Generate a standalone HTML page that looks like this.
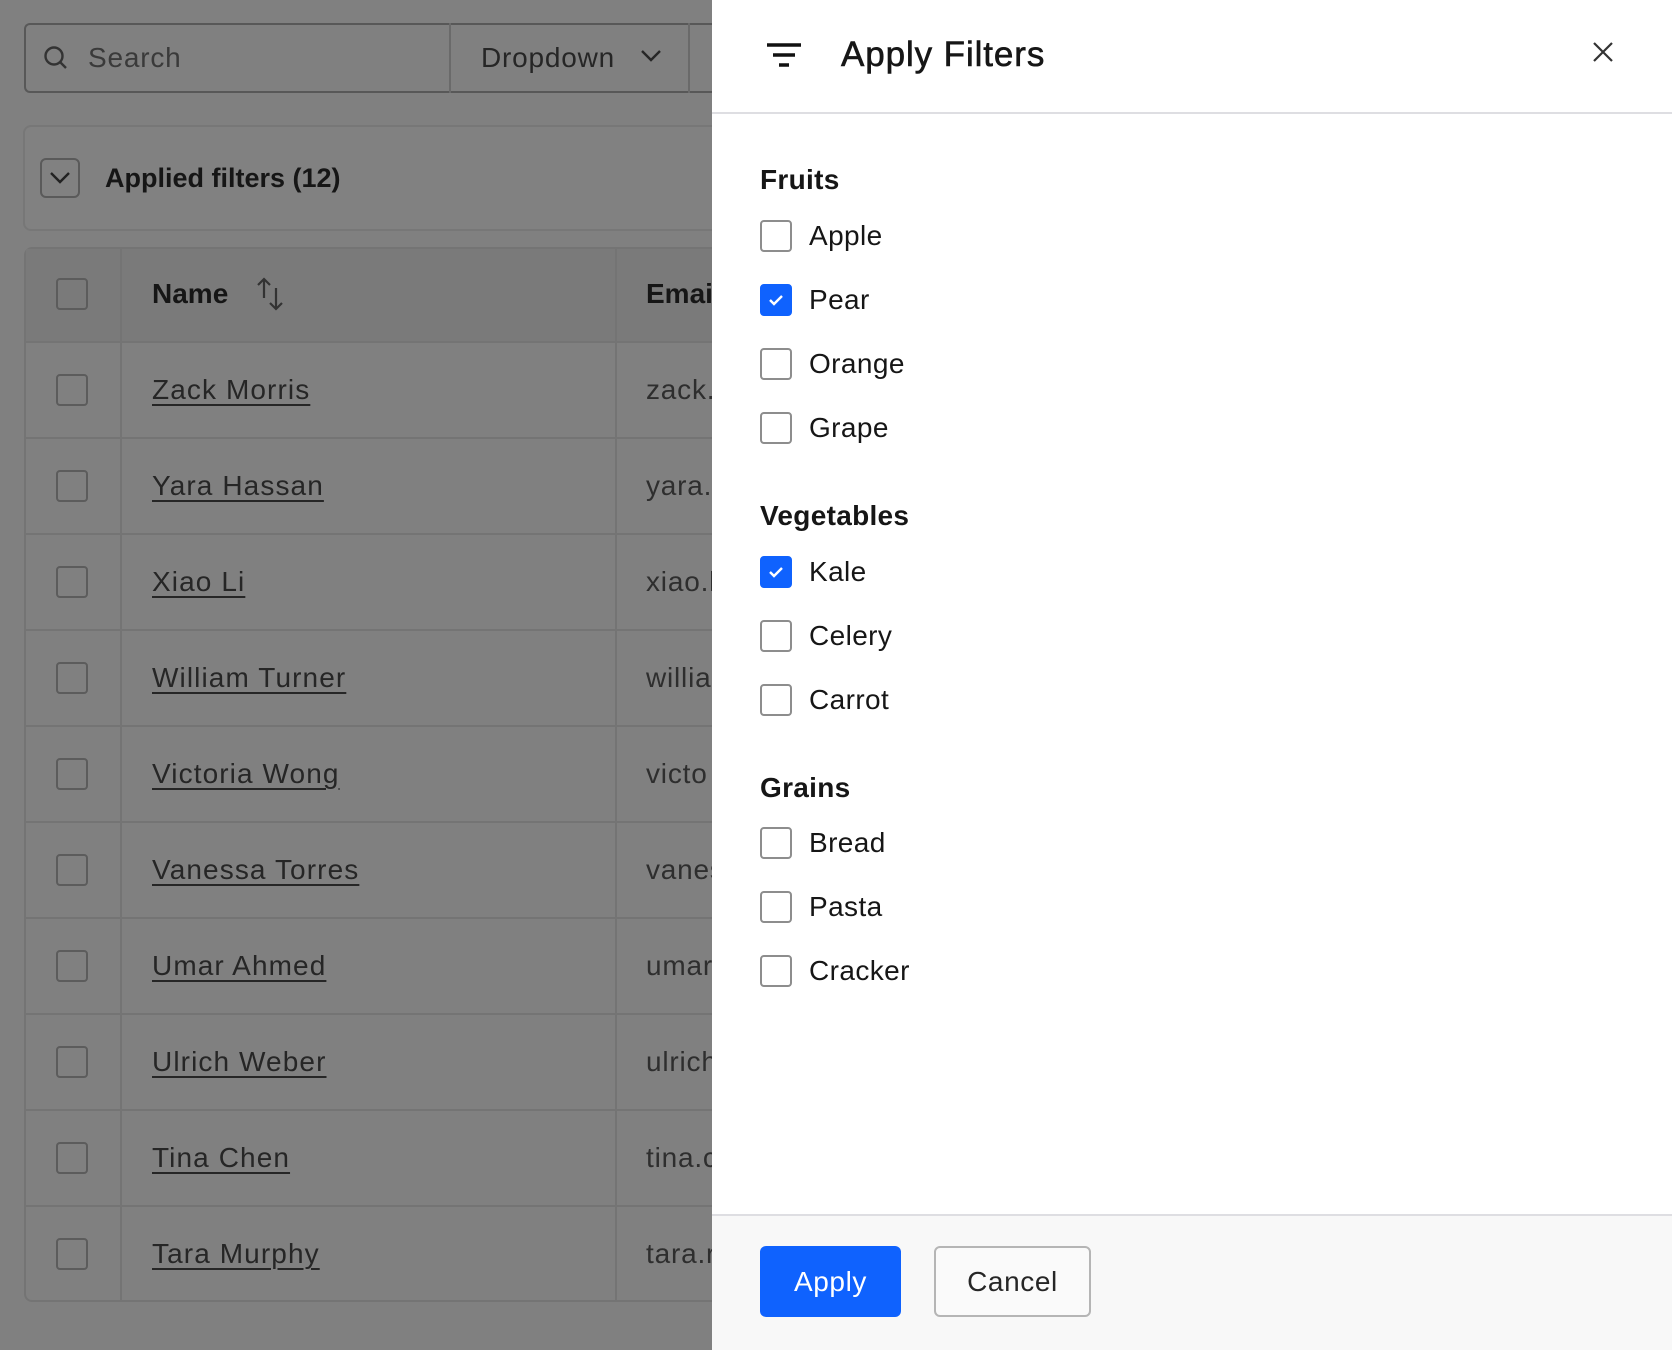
<!DOCTYPE html>
<html><head><meta charset="utf-8"><style>
*{box-sizing:border-box;margin:0;padding:0}
body{width:1672px;height:1350px;overflow:hidden;background:#808080;font-family:"Liberation Sans",sans-serif;position:relative}
.a{position:absolute}
.cb{position:absolute;width:32px;height:32px;border:2px solid #5c5c5c;border-radius:4px}
.row{position:absolute;left:24px;width:700px;height:96px;border-top:2px solid #747474}
.nm{position:absolute;left:152px;font-size:28px;color:#262626;text-decoration:underline;text-underline-offset:5px;text-decoration-thickness:2px;line-height:32px;letter-spacing:1.1px}
.em{position:absolute;left:646px;font-size:28px;color:#2e2e2e;line-height:32px;letter-spacing:0.8px}
.panel{position:absolute;left:712px;top:0;width:960px;height:1350px;background:#fff}
.h{position:absolute;left:48px;font-size:28px;font-weight:bold;color:#161616;line-height:32px;letter-spacing:0.3px}
.it{position:absolute;left:48px;height:32px}
.it .b{position:absolute;left:0;top:0;width:32px;height:32px;border:2px solid #8d8d8d;border-radius:4px;background:#fff}
.it .b.on{background:#0f62fe;border-color:#0f62fe}
.it span{position:absolute;left:49px;top:0;font-size:28px;line-height:32px;color:#161616;white-space:nowrap;letter-spacing:0.4px}
</style></head><body>
<div class="a" style="left:24px;top:23px;width:700px;height:70px;border:2px solid #585858;border-radius:6px;border-right:none"></div>
<div class="a" style="left:449px;top:23px;width:2px;height:70px;background:#6a6a6a"></div>
<div class="a" style="left:688px;top:23px;width:2px;height:70px;background:#6a6a6a"></div>
<svg class="a" style="left:42px;top:44px" width="28" height="28" viewBox="0 0 28 28"><circle cx="12" cy="12" r="8.5" fill="none" stroke="#333" stroke-width="2.4"/><path d="M18 18l6 6" stroke="#333" stroke-width="2.4"/></svg>
<div class="a" style="left:88px;top:42px;font-size:28px;color:#3a3a3a;letter-spacing:0.8px">Search</div>
<div class="a" style="left:481px;top:42px;font-size:28px;color:#262626;letter-spacing:0.8px">Dropdown</div>
<svg class="a" style="left:640px;top:48px" width="22" height="16" viewBox="0 0 22 16"><path d="M2 3l9 9 9-9" fill="none" stroke="#262626" stroke-width="2.4"/></svg>
<div class="a" style="left:23px;top:125px;width:720px;height:106px;border:2px solid #777;border-radius:8px;background:#818181"></div>
<div class="a" style="left:40px;top:158px;width:40px;height:40px;border:2px solid #5a5a5a;border-radius:6px"></div>
<svg class="a" style="left:49px;top:170px" width="22" height="16" viewBox="0 0 22 16"><path d="M2 3l9 9 9-9" fill="none" stroke="#222" stroke-width="2.4"/></svg>
<div class="a" style="left:105px;top:163px;font-size:27px;font-weight:bold;color:#161616">Applied filters (12)</div>
<div class="a" style="left:24px;top:247px;width:700px;height:1055px;border:2px solid #747474;border-radius:8px 0 0 8px;border-right:none"></div>
<div class="a" style="left:26px;top:249px;width:700px;height:92px;background:#7a7a7a"></div>
<div class="a" style="left:120px;top:249px;width:2px;height:1052px;background:#747474"></div>
<div class="a" style="left:615px;top:249px;width:2px;height:1052px;background:#747474"></div>
<div class="cb" style="left:56px;top:278px"></div>
<div class="a" style="left:152px;top:278px;font-size:28px;font-weight:bold;color:#161616">Name</div>
<svg class="a" style="left:256px;top:276px" width="30" height="36" viewBox="0 0 30 36"><path d="M8 22V3M2 9l6-6 6 6M20 12v21M14 27l6 6 6-6" fill="none" stroke="#333" stroke-width="2.2"/></svg>
<div class="a" style="left:646px;top:278px;font-size:28px;font-weight:bold;color:#161616">Emai</div>

<div class="row" style="top:341px"></div><div class="cb" style="left:56px;top:374px"></div><div class="nm" style="top:374px">Zack Morris</div><div class="em" style="top:374px">zack.</div>
<div class="row" style="top:437px"></div><div class="cb" style="left:56px;top:470px"></div><div class="nm" style="top:470px">Yara Hassan</div><div class="em" style="top:470px">yara.</div>
<div class="row" style="top:533px"></div><div class="cb" style="left:56px;top:566px"></div><div class="nm" style="top:566px">Xiao Li</div><div class="em" style="top:566px">xiao.l</div>
<div class="row" style="top:629px"></div><div class="cb" style="left:56px;top:662px"></div><div class="nm" style="top:662px">William Turner</div><div class="em" style="top:662px">willia</div>
<div class="row" style="top:725px"></div><div class="cb" style="left:56px;top:758px"></div><div class="nm" style="top:758px">Victoria Wong</div><div class="em" style="top:758px">victo</div>
<div class="row" style="top:821px"></div><div class="cb" style="left:56px;top:854px"></div><div class="nm" style="top:854px">Vanessa Torres</div><div class="em" style="top:854px">vanes</div>
<div class="row" style="top:917px"></div><div class="cb" style="left:56px;top:950px"></div><div class="nm" style="top:950px">Umar Ahmed</div><div class="em" style="top:950px">umar</div>
<div class="row" style="top:1013px"></div><div class="cb" style="left:56px;top:1046px"></div><div class="nm" style="top:1046px">Ulrich Weber</div><div class="em" style="top:1046px">ulrich</div>
<div class="row" style="top:1109px"></div><div class="cb" style="left:56px;top:1142px"></div><div class="nm" style="top:1142px">Tina Chen</div><div class="em" style="top:1142px">tina.c</div>
<div class="row" style="top:1205px"></div><div class="cb" style="left:56px;top:1238px"></div><div class="nm" style="top:1238px">Tara Murphy</div><div class="em" style="top:1238px">tara.r</div>

<div class="panel">
<svg class="a" style="left:54px;top:42px" width="36" height="28" viewBox="0 0 36 28"><path d="M1 3h34M7 13h22M13 23h10" stroke="#111" stroke-width="3.4"/></svg>
<div class="a" style="left:129px;top:35px;font-size:35px;color:#161616;letter-spacing:0.9px;-webkit-text-stroke:0.6px #161616">Apply Filters</div>
<svg class="a" style="left:880px;top:41px" width="22" height="22" viewBox="0 0 22 22"><path d="M2 2l18 18M20 2L2 20" stroke="#333" stroke-width="2.2"/></svg>
<div class="a" style="left:0;top:112px;width:960px;height:2px;background:#dedee2"></div>

<div class="h" style="top:164px">Fruits</div>
<div class="it" style="top:220px"><div class="b"></div><span>Apple</span></div>
<div class="it" style="top:284px"><div class="b on"><svg width="28" height="28" viewBox="0 0 28 28"><path d="M8 14l4 4 8-8" fill="none" stroke="#fff" stroke-width="2.4"/></svg></div><span>Pear</span></div>
<div class="it" style="top:348px"><div class="b"></div><span>Orange</span></div>
<div class="it" style="top:412px"><div class="b"></div><span>Grape</span></div>

<div class="h" style="top:500px">Vegetables</div>
<div class="it" style="top:556px"><div class="b on"><svg width="28" height="28" viewBox="0 0 28 28"><path d="M8 14l4 4 8-8" fill="none" stroke="#fff" stroke-width="2.4"/></svg></div><span>Kale</span></div>
<div class="it" style="top:620px"><div class="b"></div><span>Celery</span></div>
<div class="it" style="top:684px"><div class="b"></div><span>Carrot</span></div>

<div class="h" style="top:772px">Grains</div>
<div class="it" style="top:827px"><div class="b"></div><span>Bread</span></div>
<div class="it" style="top:891px"><div class="b"></div><span>Pasta</span></div>
<div class="it" style="top:955px"><div class="b"></div><span>Cracker</span></div>

<div class="a" style="left:0;top:1214px;width:960px;height:136px;background:#f8f8f8;border-top:2px solid #dedee2"></div>
<div class="a" style="left:48px;top:1246px;width:141px;height:71px;background:#0f62fe;border-radius:6px;color:#fff;font-size:28px;text-align:center;line-height:71px;letter-spacing:0.6px">Apply</div>
<div class="a" style="left:222px;top:1246px;width:157px;height:71px;background:#fafafa;border:2px solid #b5b5b5;border-radius:6px;color:#262626;font-size:28px;text-align:center;line-height:67px;letter-spacing:0.6px">Cancel</div>
</div>
</body></html>
